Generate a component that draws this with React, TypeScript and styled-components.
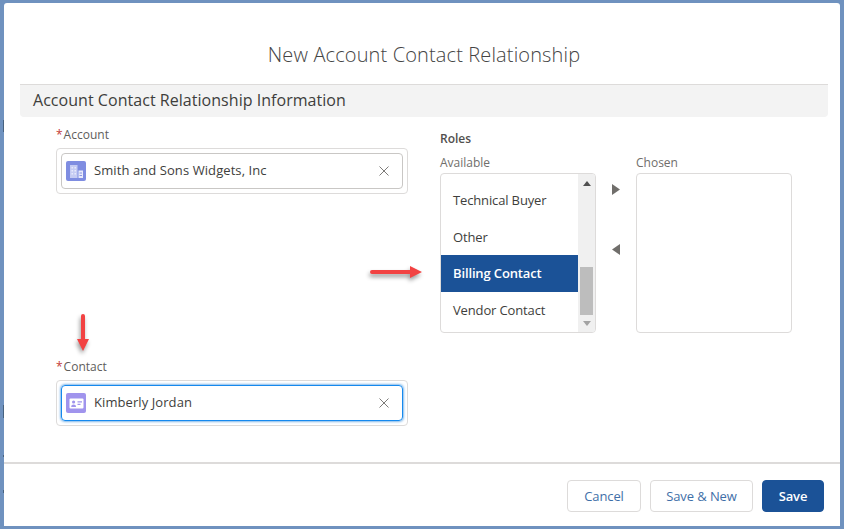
import React from 'react';
import styled, { createGlobalStyle } from 'styled-components';

const GlobalStyle = createGlobalStyle`
  html, body {
    margin: 0;
    padding: 0;
    background: #6f92bf;
  }
  body {
    font-family: "Open Sans", "Liberation Sans", sans-serif;
    color: #3e3e3c;
  }
`;

const Frame = styled.div`
  width: 844px;
  height: 529px;
  box-sizing: border-box;
  padding: 3px 4px 3px 4px;
  position: relative;
  overflow: hidden;
`;

const EdgeTick = styled.div<{ $y: number; $h: number }>`
  position: absolute;
  left: 3px;
  top: ${p => p.$y}px;
  width: 1px;
  height: ${p => p.$h}px;
  background: #47627f;
`;

const Modal = styled.div`
  height: 100%;
  background: #fff;
  border-radius: 3px 3px 0 0;
  display: flex;
  flex-direction: column;
`;

const Title = styled.h2`
  margin: 0;
  height: 81px;
  box-sizing: border-box;
  padding: 39px 0 0 4px;
  text-align: center;
  font-size: 20px;
  line-height: 26px;
  font-weight: 300;
  letter-spacing: 0.13px;
  color: #444;
`;

const SectionHeader = styled.div`
  margin: 0 12px 0 16px;
  height: 33px;
  box-sizing: border-box;
  border-top: 1px solid #dddbda;
  border-radius: 0 0 4px 4px;
  background: #f3f3f3;
  padding-left: 13px;
  font-size: 16px;
  line-height: 30px;
  letter-spacing: 0.04px;
  color: #3e3e3c;
`;

const Body = styled.div`
  flex: 1;
  display: flex;
  padding: 9px 0 0 52px;
`;

const LeftColumn = styled.div`
  width: 352px;
  display: flex;
  flex-direction: column;
  gap: 164px;
`;

const Field = styled.div`
  display: flex;
  flex-direction: column;
  gap: 5px;
`;

const Label = styled.label`
  font-size: 12px;
  line-height: 17px;
  color: #605e5c;
`;

const Required = styled.span`
  color: #c23934;
  margin-right: 1px;
`;

const LookupOuter = styled.div`
  height: 46px;
  box-sizing: border-box;
  padding: 4px;
  border: 1px solid #dddbda;
  border-radius: 4px;
`;

const LookupPill = styled.div<{ $focused?: boolean }>`
  height: 100%;
  box-sizing: border-box;
  display: flex;
  align-items: center;
  gap: 8px;
  padding: 0 12px 0 4px;
  border-radius: 4px;
  border: 1px solid ${p => (p.$focused ? '#1589ee' : '#c9c7c5')};
  box-shadow: ${p => (p.$focused ? '0 0 3px #0070d2' : 'none')};
  font-size: 13px;
  letter-spacing: 0.08px;
  color: #3e3e3c;
`;

const EntityIcon = styled.span<{ $bg: string }>`
  width: 20px;
  height: 20px;
  flex: none;
  border-radius: 2px;
  background: ${p => p.$bg};
  display: flex;
  align-items: center;
  justify-content: center;
`;

const PillText = styled.span`
  flex: 1;
  line-height: 18px;
  padding-bottom: 2px;
`;

const RolesColumn = styled.div`
  margin-left: 32px;
  width: 352px;
  padding-top: 4px;
`;

const RolesTitle = styled.div`
  font-size: 12px;
  line-height: 17px;
  font-weight: 600;
  color: #514f4d;
  margin-bottom: 7px;
`;

const DualList = styled.div`
  display: flex;
`;

const ListColumn = styled.div`
  width: 156px;
`;

const ListCaption = styled.div`
  font-size: 12px;
  line-height: 17px;
  color: #706e6b;
  margin-bottom: 2px;
`;

const ListBox = styled.div`
  height: 160px;
  box-sizing: border-box;
  border: 1px solid #dddbda;
  border-radius: 4px;
  overflow: hidden;
  display: flex;
`;

const Options = styled.ul`
  list-style: none;
  margin: 0;
  padding: 8px 0 0;
  flex: 1;
`;

const Option = styled.li<{ $selected?: boolean }>`
  height: 36.5px;
  padding-left: 12px;
  font-size: 13px;
  line-height: 37.5px;
  letter-spacing: -0.14px;
  font-weight: ${p => (p.$selected ? 600 : 400)};
  color: ${p => (p.$selected ? '#fff' : '#3e3e3c')};
  background: ${p => (p.$selected ? '#1b5297' : 'transparent')};
`;

const Scrollbar = styled.div`
  width: 17px;
  flex: none;
  background: #f0f0f0;
  display: flex;
  flex-direction: column;
  align-items: center;
  padding: 7px 2px 0;
  box-sizing: border-box;
`;

const ScrollArrow = styled.svg`
  width: 8px;
  height: 5px;
  flex: none;
  display: block;
`;

const ScrollThumb = styled.div`
  width: 13px;
  height: 48px;
  margin: 81px 0 6px;
  background: #bdbdbd;
`;

const MoveButtons = styled.div`
  width: 40px;
  display: flex;
  flex-direction: column;
  align-items: center;
  gap: 49px;
  padding-top: 30px;
  box-sizing: border-box;
`;

const MoveArrow = styled.svg`
  width: 8px;
  height: 11px;
  display: block;
`;

const Footer = styled.div`
  height: 64px;
  box-sizing: border-box;
  border-top: 2px solid #dddbda;
  padding: 16px 16px 0 0;
  display: flex;
  justify-content: flex-end;
  gap: 9px;
`;

const Button = styled.button<{ $primary?: boolean; $width: number }>`
  width: ${p => p.$width}px;
  height: 32px;
  box-sizing: border-box;
  padding: 0;
  border-radius: 4px;
  border: 1px solid ${p => (p.$primary ? '#1b5297' : '#dddbda')};
  background: ${p => (p.$primary ? '#1b5297' : '#fff')};
  color: ${p => (p.$primary ? '#fff' : '#3f6fa8')};
  font-family: inherit;
  font-size: 13px;
  letter-spacing: -0.1px;
  font-weight: ${p => (p.$primary ? 600 : 400)};
`;

const Annotation = styled.svg<{ $x: number; $y: number }>`
  position: absolute;
  left: ${p => p.$x}px;
  top: ${p => p.$y}px;
  overflow: visible;
  filter: drop-shadow(-1px 3px 2px rgba(0, 0, 0, 0.4));
`;

const BuildingIcon = () => (
  <svg width="15" height="15" viewBox="0 0 15 15">
    <path d="M1 1h7.5v13H1z" fill="#c6ccf3" />
    <path d="M9.5 6.5H14V14H9.5z" fill="#e8eafb" />
    <path d="M2.5 3h1.5v1.5H2.5zM5.5 3H7v1.5H5.5zM2.5 6h1.5v1.5H2.5zM5.5 6H7v1.5H5.5zM2.5 9h1.5v1.5H2.5zM5.5 9H7v1.5H5.5z" fill="#e8eafb" />
    <path d="M10.5 8.5h2.5v1h-2.5zM10.5 11h2.5v1h-2.5z" fill="#8c97e3" />
  </svg>
);

const ContactIcon = () => (
  <svg width="15" height="15" viewBox="0 0 15 15">
    <rect x="0.5" y="2.5" width="14" height="10" rx="1" fill="#fff" />
    <circle cx="4.6" cy="6" r="1.6" fill="#a094ed" />
    <path d="M2.2 11c0-1.6 1.1-2.4 2.4-2.4S7 9.400 7 11z" fill="#a094ed" />
    <path d="M8.500 5.200h4.500v1.200H8.500zM8.500 7.800h3v1.200h-3z" fill="#a094ed" />
  </svg>
);

const ClearIcon = () => (
  <svg width="12" height="12" viewBox="0 0 12 12">
    <path d="M1.500 1.500l9 9M10.500 1.500l-9 9" stroke="#7d7b79" strokeWidth="1" fill="none" />
  </svg>
);

export default function App() {
  return (
    <Frame>
      <GlobalStyle />
      <Modal>
        <Title>New Account Contact Relationship</Title>
        <SectionHeader>Account Contact Relationship Information</SectionHeader>
        <Body>
          <LeftColumn>
            <Field>
              <Label><Required>*</Required>Account</Label>
              <LookupOuter>
                <LookupPill>
                  <EntityIcon $bg="#7f8de1"><BuildingIcon /></EntityIcon>
                  <PillText>Smith and Sons Widgets, Inc</PillText>
                  <ClearIcon />
                </LookupPill>
              </LookupOuter>
            </Field>
            <Field>
              <Label><Required>*</Required>Contact</Label>
              <LookupOuter>
                <LookupPill $focused>
                  <EntityIcon $bg="#a094ed"><ContactIcon /></EntityIcon>
                  <PillText>Kimberly Jordan</PillText>
                  <ClearIcon />
                </LookupPill>
              </LookupOuter>
            </Field>
          </LeftColumn>
          <RolesColumn>
            <RolesTitle>Roles</RolesTitle>
            <DualList>
              <ListColumn>
                <ListCaption>Available</ListCaption>
                <ListBox>
                  <Options>
                    <Option>Technical Buyer</Option>
                    <Option>Other</Option>
                    <Option $selected>Billing Contact</Option>
                    <Option>Vendor Contact</Option>
                  </Options>
                  <Scrollbar>
                    <ScrollArrow viewBox="0 0 8 5">
                      <path d="M4 0l4 5H0z" fill="#505050" />
                    </ScrollArrow>
                    <ScrollThumb />
                    <ScrollArrow viewBox="0 0 8 5">
                      <path d="M0 0h8L4 5z" fill="#a3a3a3" />
                    </ScrollArrow>
                  </Scrollbar>
                </ListBox>
              </ListColumn>
              <MoveButtons>
                <MoveArrow viewBox="0 0 8 11">
                  <path d="M0 0l8 5.500L0 11z" fill="#706e6b" />
                </MoveArrow>
                <MoveArrow viewBox="0 0 8 11">
                  <path d="M8 0L0 5.500 8 11z" fill="#706e6b" />
                </MoveArrow>
              </MoveButtons>
              <ListColumn>
                <ListCaption>Chosen</ListCaption>
                <ListBox />
              </ListColumn>
            </DualList>
          </RolesColumn>
        </Body>
        <Footer>
          <Button $width={74}>Cancel</Button>
          <Button $width={103}>Save &amp; New</Button>
          <Button $primary $width={62}>Save</Button>
        </Footer>
      </Modal>
      <EdgeTick $y={120} $h={12} />
      <EdgeTick $y={405} $h={13} />
      <EdgeTick $y={455} $h={2} />
      <EdgeTick $y={490} $h={3} />
      <Annotation $x={370} $y={266} width="52" height="12" viewBox="0 0 52 12">
        <path d="M2 4h38V0l12 6-12 6V8H2a2 2 0 0 1 0-4z" fill="#f24242" />
      </Annotation>
      <Annotation $x={77} $y={314} width="12" height="37" viewBox="0 0 12 37">
        <path d="M4 2a2 2 0 0 1 4 0v23h4L6 37 0 25h4z" fill="#f24242" />
      </Annotation>
    </Frame>
  );
}
